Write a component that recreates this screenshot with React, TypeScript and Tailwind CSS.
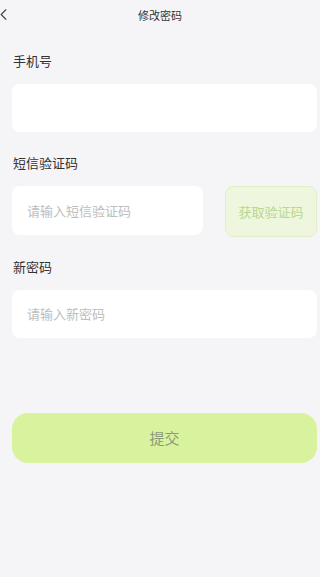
import { ChevronLeft } from 'lucide-react';

const font = { fontFamily: '"Noto Sans CJK SC", "Noto Sans", sans-serif' };

function Label({ children }: { children: React.ReactNode }) {
    return <div className="text-[13px] leading-[18px] text-[#333] px-[13px]">{children}</div>;
}

export default function App() {
    return (
        <div className="min-h-[577px] w-[320px] bg-[#f5f5f8] flex flex-col" style={font}>
            <div className="relative h-[30px] flex items-center justify-center">
                <ChevronLeft className="absolute left-[-6px] top-[5px] w-[19px] h-[19px] text-[#444]" strokeWidth={1.4} />
                <span className="text-[11px] text-[#333]">修改密码</span>
            </div>

            <div className="mt-[22px]">
                <Label>手机号</Label>
            </div>
            <div className="ml-[12px] mr-[3px] mt-[14px] h-[48px] bg-white rounded-[8px]" />

            <div className="mt-[22px]">
                <Label>短信验证码</Label>
            </div>
            <div className="ml-[12px] mr-[3px] mt-[14px] flex gap-[22px]">
                <div className="w-[191px] h-[49px] bg-white rounded-[8px] flex items-center px-[15px]">
                    <span className="text-[13px] text-[#bdbdbd]">请输入短信验证码</span>
                </div>
                <div className="flex-1 h-[51px] rounded-[8px] bg-[#eef6de] border border-[#e2f0c3] flex items-center justify-center">
                    <span className="text-[13px] text-[#b9d88e]">获取验证码</span>
                </div>
            </div>

            <div className="mt-[21px]">
                <Label>新密码</Label>
            </div>
            <div className="ml-[12px] mr-[3px] mt-[14px] h-[48px] bg-white rounded-[8px] flex items-center px-[15px]">
                <span className="text-[13px] text-[#bdbdbd]">请输入新密码</span>
            </div>

            <div className="ml-[12px] mr-[3px] mt-[75px] h-[50px] rounded-[16px] bg-[#d8f29e] flex items-center justify-center">
                <span className="text-[15px] text-[#8c9a78]">提交</span>
            </div>
        </div>
    );
}
